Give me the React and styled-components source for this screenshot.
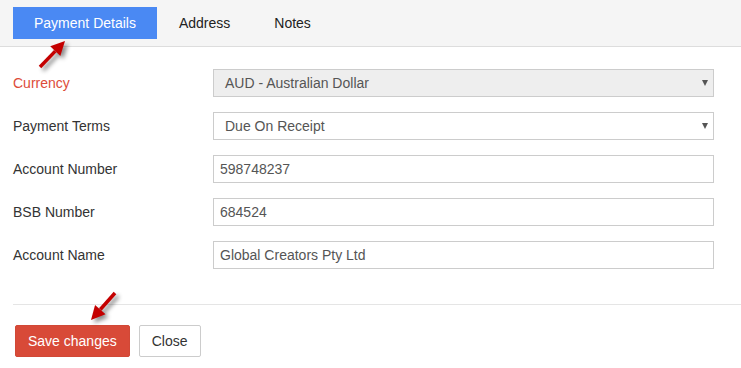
import styled, { createGlobalStyle } from 'styled-components'

const GlobalStyle = createGlobalStyle`
  html, body {
    margin: 0;
    padding: 0;
    background: #fff;
  }
  body {
    font-family: 'Liberation Sans', Arial, sans-serif;
    font-size: 14px;
    color: #333;
  }
`

const Page = styled.div`
  position: relative;
  width: 741px;
  height: 368px;
  overflow: hidden;
`

const TabBar = styled.div`
  display: flex;
  align-items: center;
  height: 47px;
  padding: 0 13px;
  background: #f5f5f5;
  border-bottom: 1px solid #dddddd;
  box-sizing: border-box;
`

const Tab = styled.div`
  height: 32px;
  padding: 0 ${(p) => (p.$active ? '21px' : '22px')};
  display: flex;
  align-items: center;
  color: ${(p) => (p.$active ? '#fff' : '#222')};
  background: ${(p) => (p.$active ? '#4a89f3' : 'transparent')};
  font-size: 14px;
`

const Form = styled.div`
  display: flex;
  flex-direction: column;
  gap: 15px;
  padding: 22px 27px 0 13px;
`

const Row = styled.div`
  display: grid;
  grid-template-columns: 200px 1fr;
  align-items: center;
  height: 28px;
`

const Label = styled.div`
  color: ${(p) => (p.$error ? '#dd4b39' : '#333')};
`

const Field = styled.div`
  position: relative;
  height: 28px;
  box-sizing: border-box;
  border: 1px solid #cccccc;
  background: ${(p) => (p.$disabled ? '#eeeeee' : '#fff')};
  display: flex;
  align-items: center;
  padding-left: ${(p) => (p.$select ? '11px' : '6px')};
  color: #555;
`

const Caret = styled.span`
  position: absolute;
  right: 5px;
  top: 10px;
  width: 0;
  height: 0;
  border-left: 3px solid transparent;
  border-right: 3px solid transparent;
  border-top: 6px solid #555;
`

const Divider = styled.div`
  margin: 35px 0 0 13px;
  border-top: 1px solid #e5e5e5;
`

const Footer = styled.div`
  display: flex;
  gap: 9px;
  padding: 20px 15px 0;
`

const Button = styled.button`
  height: 32px;
  padding: 0 12px;
  font-family: inherit;
  font-size: 14px;
  border-radius: 2px;
  border: 1px solid ${(p) => (p.$primary ? '#d14836' : '#cccccc')};
  background: ${(p) => (p.$primary ? '#d84a38' : '#fff')};
  color: ${(p) => (p.$primary ? '#fff' : '#333')};
`

const Arrow = styled.svg`
  position: absolute;
  overflow: visible;
  filter: drop-shadow(3px 3px 2px rgba(0, 0, 0, 0.45));
`

function RedArrow({ x1, y1, x2, y2 }) {
  const ang = Math.atan2(y2 - y1, x2 - x1)
  const len = 14
  const w = 7
  const bx = x2 - Math.cos(ang) * len
  const by = y2 - Math.sin(ang) * len
  const px = -Math.sin(ang) * w
  const py = Math.cos(ang) * w
  return (
    <Arrow width="741" height="368" style={{ left: 0, top: 0 }}>
      <line x1={x1} y1={y1} x2={bx} y2={by} stroke="#c40000" strokeWidth="3.5" />
      <polygon
        points={`${x2},${y2} ${bx + px},${by + py} ${bx - px},${by - py}`}
        fill="#c40000"
      />
    </Arrow>
  )
}

const rows = [
  { label: 'Currency', value: 'AUD - Australian Dollar', error: true, select: true, disabled: true },
  { label: 'Payment Terms', value: 'Due On Receipt', select: true },
  { label: 'Account Number', value: '598748237' },
  { label: 'BSB Number', value: '684524' },
  { label: 'Account Name', value: 'Global Creators Pty Ltd' },
]

export default function App() {
  return (
    <Page>
      <GlobalStyle />
      <TabBar>
        <Tab $active>Payment Details</Tab>
        <Tab>Address</Tab>
        <Tab>Notes</Tab>
      </TabBar>
      <Form>
        {rows.map((r) => (
          <Row key={r.label}>
            <Label $error={r.error}>{r.label}</Label>
            <Field $select={r.select} $disabled={r.disabled}>
              {r.value}
              {r.select && <Caret />}
            </Field>
          </Row>
        ))}
      </Form>
      <Divider />
      <Footer>
        <Button $primary>Save changes</Button>
        <Button>Close</Button>
      </Footer>
      <RedArrow x1={40} y1={67} x2={65} y2={41} />
      <RedArrow x1={115} y1={293} x2={91} y2={320} />
    </Page>
  )
}
